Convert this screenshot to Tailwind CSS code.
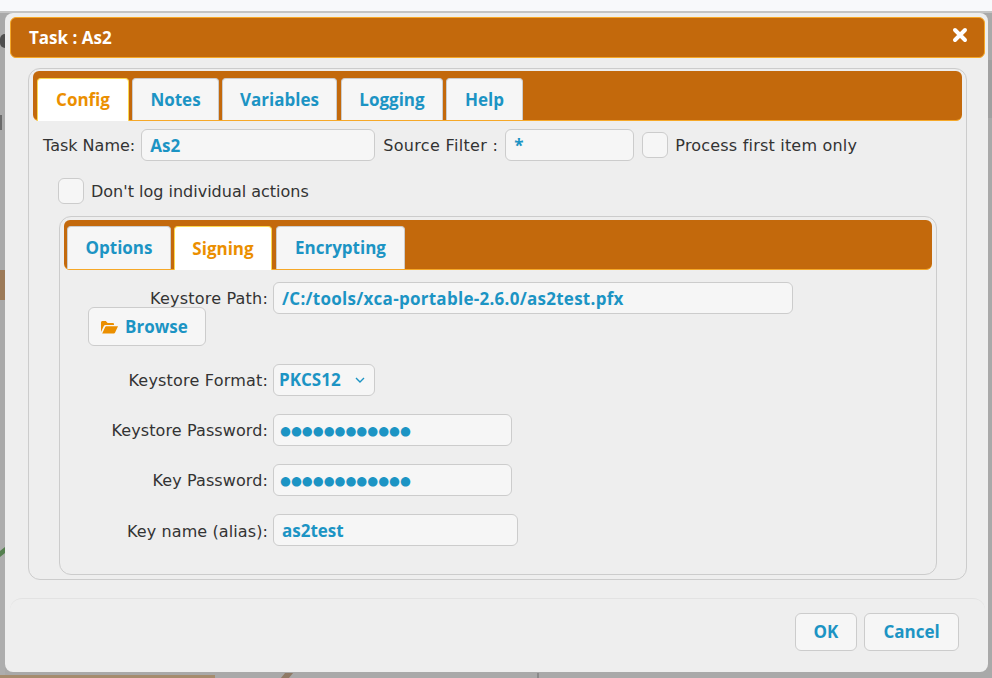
<!DOCTYPE html>
<html>
<head>
<meta charset="utf-8">
<title>Task : As2</title>
<script src="https://cdn.jsdelivr.net/npm/@tailwindcss/browser@4"></script>
</head>
<body class="w-[992px] h-[678px] overflow-hidden relative bg-[#a9a9a9] font-['DejaVu_Sans',sans-serif] text-[16px] text-[#333333]">

<div class="h-[11px] bg-[#f8f9fb]"></div>
<div class="h-[2px] bg-[#c4c4c4]"></div>

<!-- bits of the page behind the dialog -->
<div class="absolute left-0 top-[34px] w-[5px] h-[14px] bg-[#4f4f4f] rounded-l-full"></div>
<div class="absolute left-0 top-[115px] w-[2px] h-[15px] bg-[#6a6a6a]"></div>
<div class="absolute left-0 top-[270px] w-[5px] h-[30px] bg-[#9c7a58]"></div>
<div class="absolute left-0 top-[480px] w-[5px] h-[198px] bg-[#adadad]"></div>
<div class="absolute left-0 top-[549px] w-[5px] h-[6px] bg-[#55804f] -skew-y-[40deg]"></div>
<div class="absolute right-0 top-[60px] w-[4px] h-[58px] bg-[#a0a0a0]"></div>
<div class="absolute left-0 top-[675px] w-[215px] h-[3px] bg-[#a58c6e]"></div>
<div class="absolute left-[283px] top-[673px] w-[8px] h-[5px] bg-[#8f7a66] skew-x-[-40deg]"></div>
<div class="absolute left-[537px] top-[673px] w-[2px] h-[5px] bg-[#8a8a8a]"></div>

<!-- dialog -->
<div class="absolute left-[5px] top-[13px] w-[983px] h-[659px] bg-[#eeeeee] rounded-lg p-[4px] flex flex-col">

  <div class="h-[41px] ml-[1px] mr-[-1px] shrink-0 bg-[#c3690c] border border-[#f6a828] rounded-md flex items-center justify-between pl-[18px] pr-[16px] text-white font-['Open_Sans',sans-serif] font-bold text-[17px]">
    <span>Task : As2</span>
    <svg class="w-[16px] h-[16px] -mt-[6px]" viewBox="0 0 16 16"><path d="M3 3l10 10M13 3L3 13" stroke="#fff" stroke-width="4" stroke-linecap="round"/></svg>
  </div>

  <!-- outer panel -->
  <div class="mt-[10px] ml-[19px] w-[939px] h-[512px] shrink-0 border border-[#cccccc] rounded-[12px] pt-[2px] px-[4px]">
    <div class="h-[50px] bg-[#c3690c] border-b border-[#f6a828] rounded-md flex items-end pl-[4px] gap-[3px] font-['Open_Sans',sans-serif] font-bold text-[17px]">
      <div class="w-[92px] h-[43px] -mb-px bg-white border border-[#fbd850] border-b-0 rounded-t flex items-center justify-center text-[#eb8f00]">Config</div>
      <div class="w-[87px] h-[42px] bg-[#f6f6f6] border border-[#cccccc] border-b-0 rounded-t flex items-center justify-center text-[#1c94c4]">Notes</div>
      <div class="w-[115px] h-[42px] bg-[#f6f6f6] border border-[#cccccc] border-b-0 rounded-t flex items-center justify-center text-[#1c94c4]">Variables</div>
      <div class="w-[102px] h-[42px] ml-[1px] bg-[#f6f6f6] border border-[#cccccc] border-b-0 rounded-t flex items-center justify-center text-[#1c94c4]">Logging</div>
      <div class="w-[77px] h-[42px] bg-[#f6f6f6] border border-[#cccccc] border-b-0 rounded-t flex items-center justify-center text-[#1c94c4]">Help</div>
    </div>

    <div class="mt-[8px] ml-[10px] flex items-center h-[32px]">
      <span class="mt-[2px]">Task Name:</span>
      <input class="ml-[6px] w-[234px] h-[32px] px-[8px] bg-[#f6f6f6] border border-[#cccccc] rounded-md font-['Open_Sans',sans-serif] font-bold text-[17px] text-[#1c94c4] outline-none" value="As2">
      <span class="ml-[8px] mt-[2px] tracking-[0.33px]">Source Filter :</span>
      <input class="ml-[7px] w-[129px] h-[32px] px-[8px] bg-[#f6f6f6] border border-[#cccccc] rounded-md font-['Open_Sans',sans-serif] font-bold text-[17px] text-[#1c94c4] outline-none" value="*">
      <span class="ml-[8px] w-[26px] h-[26px] bg-[#f6f6f6] border border-[#cccccc] rounded-md"></span>
      <span class="ml-[7px] mt-[2px] tracking-[0.2px]">Process first item only</span>
    </div>

    <div class="mt-[17px] ml-[25px] flex items-center h-[26px]">
      <span class="w-[26px] h-[26px] bg-[#f6f6f6] border border-[#cccccc] rounded-md"></span>
      <span class="ml-[7px] mt-[2px]">Don't log individual actions</span>
    </div>

    <!-- inner panel -->
    <div class="mt-[12px] ml-[26px] w-[878px] h-[359px] border border-[#cccccc] rounded-[12px] pt-[3px] px-[4px]">
      <div class="h-[50px] bg-[#c3690c] border-b border-[#f6a828] rounded-md flex items-end pl-[3px] gap-[3px] font-['Open_Sans',sans-serif] font-bold text-[17px]">
        <div class="w-[104px] h-[43px] bg-[#f6f6f6] border border-[#cccccc] border-b-0 rounded-t flex items-center justify-center text-[#1c94c4]">Options</div>
        <div class="w-[98px] h-[44px] -mb-px bg-white border border-[#fbd850] border-b-0 rounded-t flex items-center justify-center text-[#eb8f00]">Signing</div>
        <div class="w-[129px] h-[43px] ml-[1px] bg-[#f6f6f6] border border-[#cccccc] border-b-0 rounded-t flex items-center justify-center text-[#1c94c4]">Encrypting</div>
      </div>

      <div class="mt-[12px] flex items-center">
        <span class="w-[204px] mt-[2px] text-right tracking-[0.2px]">Keystore Path:</span>
        <input class="ml-[5px] w-[520px] h-[32px] px-[8px] bg-[#f6f6f6] border border-[#cccccc] rounded-md font-['Open_Sans',sans-serif] font-bold text-[17px] tracking-[0.27px] text-[#1c94c4] outline-none" value="/C:/tools/xca-portable-2.6.0/as2test.pfx">
      </div>
      <button class="relative -mt-[7px] ml-[24px] w-[118px] h-[39px] bg-[#f6f6f6] border border-[#cccccc] rounded-md flex items-center pl-[11px] gap-[6px] font-['Open_Sans',sans-serif] font-bold text-[17px] text-[#1c94c4]">
        <svg class="w-[19px] h-[16px]" viewBox="0 0 19 16"><path d="M1 13V3.5C1 2.7 1.6 2 2.4 2h3.4l1.8 2h5.2c.7 0 1.2.5 1.2 1.2V6H5.4c-.7 0-1.3.4-1.6 1L1 13zm1.2 1.4l3-6.4c.2-.4.6-.7 1.1-.7H18l-3 6.4c-.2.4-.6.7-1.1.7H2.2z" fill="#eb8f00"/></svg>
        Browse
      </button>

      <div class="mt-[18px] flex items-center">
        <span class="w-[204px] mt-[2px] text-right tracking-[0.2px]">Keystore Format:</span>
        <div class="ml-[5px] w-[102px] h-[32px] pl-[5px] pr-[9px] bg-[#f6f6f6] border border-[#cccccc] rounded-md font-['Open_Sans',sans-serif] font-bold text-[17px] text-[#1c94c4] flex items-center justify-between">
          PKCS12
          <svg class="w-[10px] h-[6px]" viewBox="0 0 10 6"><path d="M1 1l4 4 4-4" fill="none" stroke="#1c94c4" stroke-width="1.4"/></svg>
        </div>
      </div>
      <div class="mt-[18px] flex items-center">
        <span class="w-[204px] mt-[2px] text-right tracking-[0.1px]">Keystore Password:</span>
        <input class="ml-[5px] w-[239px] h-[32px] px-[6px] bg-[#f6f6f6] border border-[#cccccc] rounded-md text-[12.5px] text-[#1c94c4] outline-none" value="●●●●●●●●●●●●">
      </div>
      <div class="mt-[18px] flex items-center">
        <span class="w-[204px] mt-[2px] text-right tracking-[0.1px]">Key Password:</span>
        <input class="ml-[5px] w-[239px] h-[32px] px-[6px] bg-[#f6f6f6] border border-[#cccccc] rounded-md text-[12.5px] text-[#1c94c4] outline-none" value="●●●●●●●●●●●●">
      </div>
      <div class="mt-[18px] flex items-center">
        <span class="w-[204px] mt-[3px] text-right tracking-[0.1px]">Key name (alias):</span>
        <input class="ml-[5px] w-[245px] h-[32px] px-[8px] bg-[#f6f6f6] border border-[#cccccc] rounded-md font-['Open_Sans',sans-serif] font-bold text-[17px] text-[#1c94c4] outline-none" value="as2test">
      </div>
    </div>
  </div>

  <!-- footer -->
  <div class="mt-[18px] ml-[1px] mr-[-1px] flex-1 border-t border-[#e2e2e2] rounded-[12px] flex justify-end items-start pt-[14px] pr-[26px] gap-[7px] font-['Open_Sans',sans-serif] font-bold text-[17px] text-[#1c94c4]">
    <button class="w-[62px] h-[38px] bg-[#f6f6f6] border border-[#cccccc] rounded-md">OK</button>
    <button class="w-[95px] h-[38px] bg-[#f6f6f6] border border-[#cccccc] rounded-md">Cancel</button>
  </div>
</div>
</body>
</html>
